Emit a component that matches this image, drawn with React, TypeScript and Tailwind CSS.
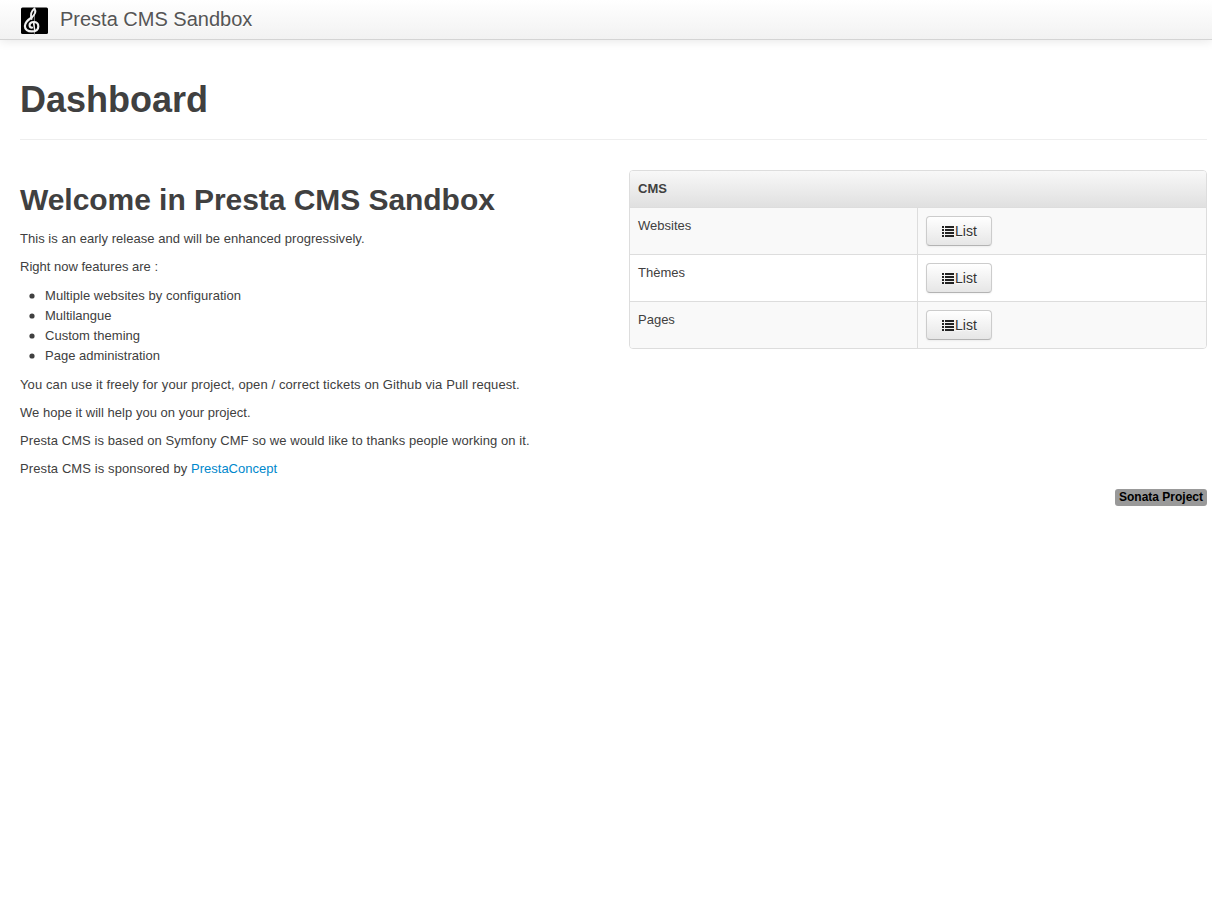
const features = [
  { text: "Multiple websites by configuration", spacing: "tracking-[0.05px]" },
  { text: "Multilangue", spacing: "" },
  { text: "Custom theming", spacing: "tracking-[0.03px]" },
  { text: "Page administration", spacing: "" },
];

const models = ["Websites", "Thèmes", "Pages"];

function Logo() {
  return (
    <svg width="28" height="28" viewBox="0 0 28 28" fill="none" aria-hidden="true">
      <rect x="1" y="0.5" width="27" height="26.5" rx="1.5" fill="#000" />
      <g stroke="#f0f0f0" strokeLinecap="round">
        <path d="M14.4 27V1" stroke="#858585" strokeWidth="1" />
        <path d="M11.6 12C10.2 8 11.4 4 14.5 1.5C16.4 4.5 14.6 8.2 11 11" strokeWidth="1.8" />
        <path d="M12 10.2C8.2 12.6 5 15.2 4.9 19C4.8 22.6 8 24.4 11.5 24.4C15.8 24.4 18.3 22.6 18.3 19.4C18.3 16.6 16.2 15 13.6 15C10.9 15 9.3 16.7 9.6 18.7C9.8 20 10.8 20.8 12 20.7" strokeWidth="2.2" />
        <path d="M13.4 15L14.8 23.4" strokeWidth="1.5" />
      </g>
    </svg>
  );
}

function ListIcon() {
  return (
    <svg width="14" height="14" viewBox="0 0 14 14" fill="#222" shapeRendering="crispEdges" aria-hidden="true">
      {[2, 5, 8, 11].map((y) => (
        <path key={y} d={`M1 ${y}h2v2h-2zM4 ${y}h9v2h-9z`} />
      ))}
    </svg>
  );
}

function Bullet() {
  return (
    <svg width="6" height="6" viewBox="0 0 6 6" fill="#404040" aria-hidden="true">
      <circle cx="3" cy="3" r="2.6" />
    </svg>
  );
}

export default function App() {
  return (
    <div className="min-h-[897px] bg-white font-['Liberation_Sans',Arial,sans-serif] text-[13px] leading-[18px] text-[#404040]">
      <header className="flex h-10 items-start border-b border-[#d4d4d4] bg-linear-to-b from-white to-[#f2f2f2] pl-5 shadow-[0_1px_10px_rgba(0,0,0,0.1)]">
        <a className="flex items-start gap-3 text-xl leading-5 text-[#555]">
          <span className="pt-[7px]"><Logo /></span>
          <span className="pt-[9px] [text-shadow:0_1px_0_#fff]">Presta CMS Sandbox</span>
        </a>
      </header>
      <main className="pr-[5px] pl-5">
        <div className="mb-[30px] border-b border-[#eee] pt-10 pb-[19px]">
          <h1 className="text-4xl leading-10 font-bold">Dashboard</h1>
        </div>
        <div className="flex justify-between">
          <section className="w-[578px] pt-[10px]">
            <h2 className="mb-[10px] text-[30px] leading-10 font-bold tracking-[-0.05px]">Welcome in Presta CMS Sandbox</h2>
            <p className="mb-[10px] tracking-[0.038px]">This is an early release and will be enhanced progressively.</p>
            <p className="mb-[10px]">Right now features are :</p>
            <ul className="mb-[10px] pl-[9px] leading-5">
              {features.map((f) => (
                <li key={f.text} className="flex items-center gap-[10px]">
                  <Bullet />
                  <span className={f.spacing}>{f.text}</span>
                </li>
              ))}
            </ul>
            <p className="mb-[10px] tracking-[0.107px]">You can use it freely for your project, open / correct tickets on Github via Pull request.</p>
            <p className="mb-[10px] tracking-[0.025px]">We hope it will help you on your project.</p>
            <p className="mb-[10px] tracking-[0.073px]">Presta CMS is based on Symfony CMF so we would like to thanks people working on it.</p>
            <p className="mb-[10px] tracking-[0.1px]">Presta CMS is sponsored by <a className="tracking-normal text-[#0088cc]">PrestaConcept</a></p>
          </section>
          <section className="w-[578px] self-start overflow-hidden rounded-[4px] border border-[#ddd]">
            <div className="h-9 bg-linear-to-b from-[#f8f8f8] to-[#e0e0e0] px-2 pt-[9px] font-bold">CMS</div>
            {models.map((name) => (
              <div key={name} className="flex h-[47px] border-t border-[#ddd] odd:bg-white even:bg-[#f9f9f9]">
                <div className="w-[287px] px-2 pt-[9px]">{name}</div>
                <div className="flex-1 border-l border-[#ddd] px-2 pt-2">
                  <button className="flex h-[30px] items-center rounded-[4px] border border-[#ccc] border-b-[#b3b3b3] bg-linear-to-b from-white to-[#e6e6e6] px-[14px] text-sm leading-5 text-[#333] shadow-[inset_0_1px_0_rgba(255,255,255,0.2),0_1px_2px_rgba(0,0,0,0.05)] [text-shadow:0_1px_1px_rgba(255,255,255,0.75)]">
                    <ListIcon />
                    List
                  </button>
                </div>
              </div>
            ))}
          </section>
        </div>
        <footer className="flex justify-end pt-[1px]">
          <span className="h-[17px] rounded-[3px] bg-[#999] px-1 text-xs leading-[17px] font-bold text-black">Sonata Project</span>
        </footer>
      </main>
    </div>
  );
}
